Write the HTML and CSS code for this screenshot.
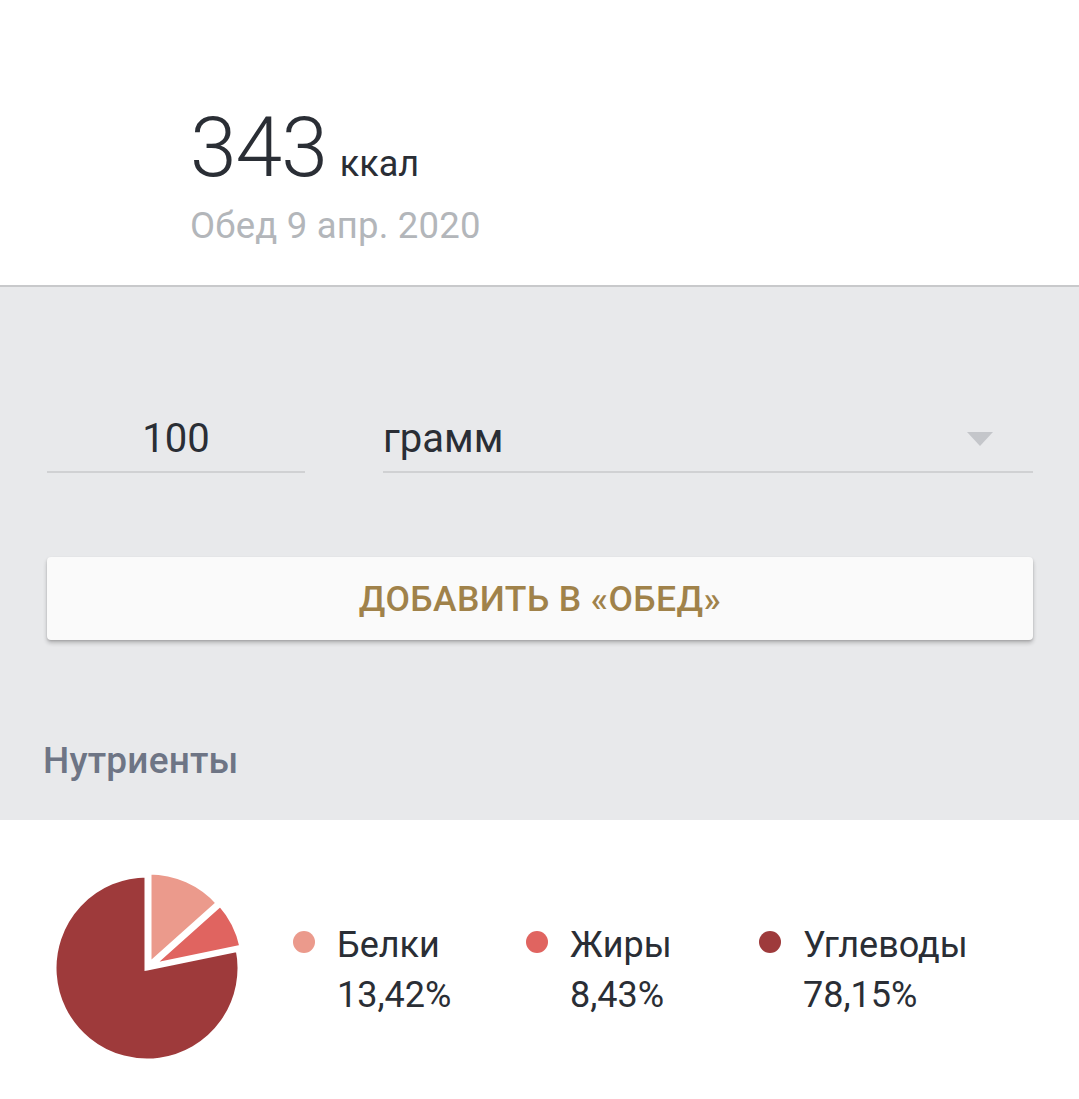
FILE: index.html
```html
<!DOCTYPE html>
<html lang="ru">
<head>
<meta charset="utf-8">
<link rel="stylesheet" href="styles.css">
</head>
<body>
<header class="summary">
  <div class="kcal-row">
    <span class="kcal-value">343</span>
    <span class="kcal-unit">ккал</span>
  </div>
  <div class="meal-date">Обед 9 апр. 2020</div>
</header>
<section class="portion">
  <div class="inputs">
    <div class="field amount">100</div>
    <div class="field unit">
      <span>грамм</span>
      <svg class="caret" width="26" height="14" viewBox="0 0 26 14"><polygon points="0,0 26,0 13,14" fill="#c4c6ca"/></svg>
    </div>
  </div>
  <button class="add-btn">ДОБАВИТЬ В «ОБЕД»</button>
  <h2 class="section-title">Нутриенты</h2>
</section>
<section class="nutrients">
  <svg class="pie" width="188" height="188" viewBox="-94 -94 188 188">
    <path d="M0,0 L0,-93 A93,93 0 0 1 69.4,-62 Z" fill="#eb9a8c" stroke="#fff" stroke-width="5" stroke-linejoin="miter" transform="translate(2,-3)"/>
    <path d="M0,0 L69.4,-62 A93,93 0 0 1 91.1,-18.8 Z" fill="#e06460" stroke="#fff" stroke-width="5" stroke-linejoin="miter" transform="translate(4,-2)"/>
    <path d="M0,0 L91.1,-18.8 A93,93 0 1 1 0,-93 Z" fill="#9e3a3b" stroke="#fff" stroke-width="5" stroke-linejoin="miter"/>
  </svg>
  <div class="legend">
    <div class="legend-item">
      <span class="dot protein"></span>
      <div class="legend-text"><div>Белки</div><div>13,42%</div></div>
    </div>
    <div class="legend-item">
      <span class="dot fat"></span>
      <div class="legend-text"><div>Жиры</div><div>8,43%</div></div>
    </div>
    <div class="legend-item">
      <span class="dot carbs"></span>
      <div class="legend-text"><div>Углеводы</div><div>78,15%</div></div>
    </div>
  </div>
</section>
</body>
</html>
```
FILE: styles.css
```css
* { box-sizing: border-box; }
html, body { margin: 0; padding: 0; background: #fff; }
body {
  font-family: Roboto, "Noto Sans", sans-serif;
  color: #2a2e35;
  width: 1079px;
  height: 1099px;
  overflow: hidden;
}
.summary {
  height: 287px;
  padding: 106px 0 0 190px;
  border-bottom: 2px solid #c8c9cb;
}
.kcal-row {
  display: flex;
  align-items: baseline;
  gap: 13px;
  height: 84px;
}
.kcal-value {
  font-size: 84px;
  font-weight: 300;
  line-height: 1;
  letter-spacing: -1px;
}
.kcal-unit {
  font-size: 36px;
  line-height: 1;
  font-weight: 400;
}
.meal-date {
  margin-top: 18px;
  font-size: 36.5px;
  line-height: 1;
  color: #b3b6ba;
  font-weight: 400;
  letter-spacing: 0.2px;
}
.portion {
  background: #e8e9eb;
  padding: 132px 46px 41px 47px;
  height: 533px;
}
.inputs {
  display: flex;
  gap: 78px;
}
.field {
  font-size: 40px;
  line-height: 40px;
  padding-bottom: 12px;
  border-bottom: 2px solid #d0d1d3;
}
.amount {
  width: 258px;
  text-align: center;
}
.unit {
  flex: 1;
  display: flex;
  align-items: flex-start;
  justify-content: space-between;
}
.caret {
  margin: 13px 40px 0 0;
}
.add-btn {
  display: block;
  width: 100%;
  height: 83px;
  margin-top: 84px;
  border: none;
  border-radius: 4px;
  background: #fafafa;
  box-shadow: 0 3px 4px rgba(0,0,0,0.22), 0 1px 2px rgba(0,0,0,0.12);
  color: #a0824a;
  font-family: Roboto, sans-serif;
  font-weight: 500;
  font-size: 35.5px;
  letter-spacing: 0.4px;
}
.section-title {
  margin: 102px 0 0 -4px;
  font-size: 37px;
  line-height: 1;
  font-weight: 500;
  color: #6e7585;
  letter-spacing: 0.2px;
}
.nutrients {
  display: flex;
  align-items: flex-start;
  padding: 54px 0 0 53px;
}
.pie { display: block; }
.legend {
  display: flex;
  margin: 46px 0 0 52px;
}
.legend-item {
  display: flex;
  align-items: flex-start;
  gap: 22px;
  width: 233px;
}
.dot {
  width: 22px;
  height: 22px;
  border-radius: 50%;
  margin-top: 11px;
  flex: none;
}
.dot.protein { background: #eb9a8c; }
.dot.fat { background: #e06460; }
.dot.carbs { background: #9e3a3b; }
.legend-text {
  font-size: 36px;
  line-height: 50px;
}
```
